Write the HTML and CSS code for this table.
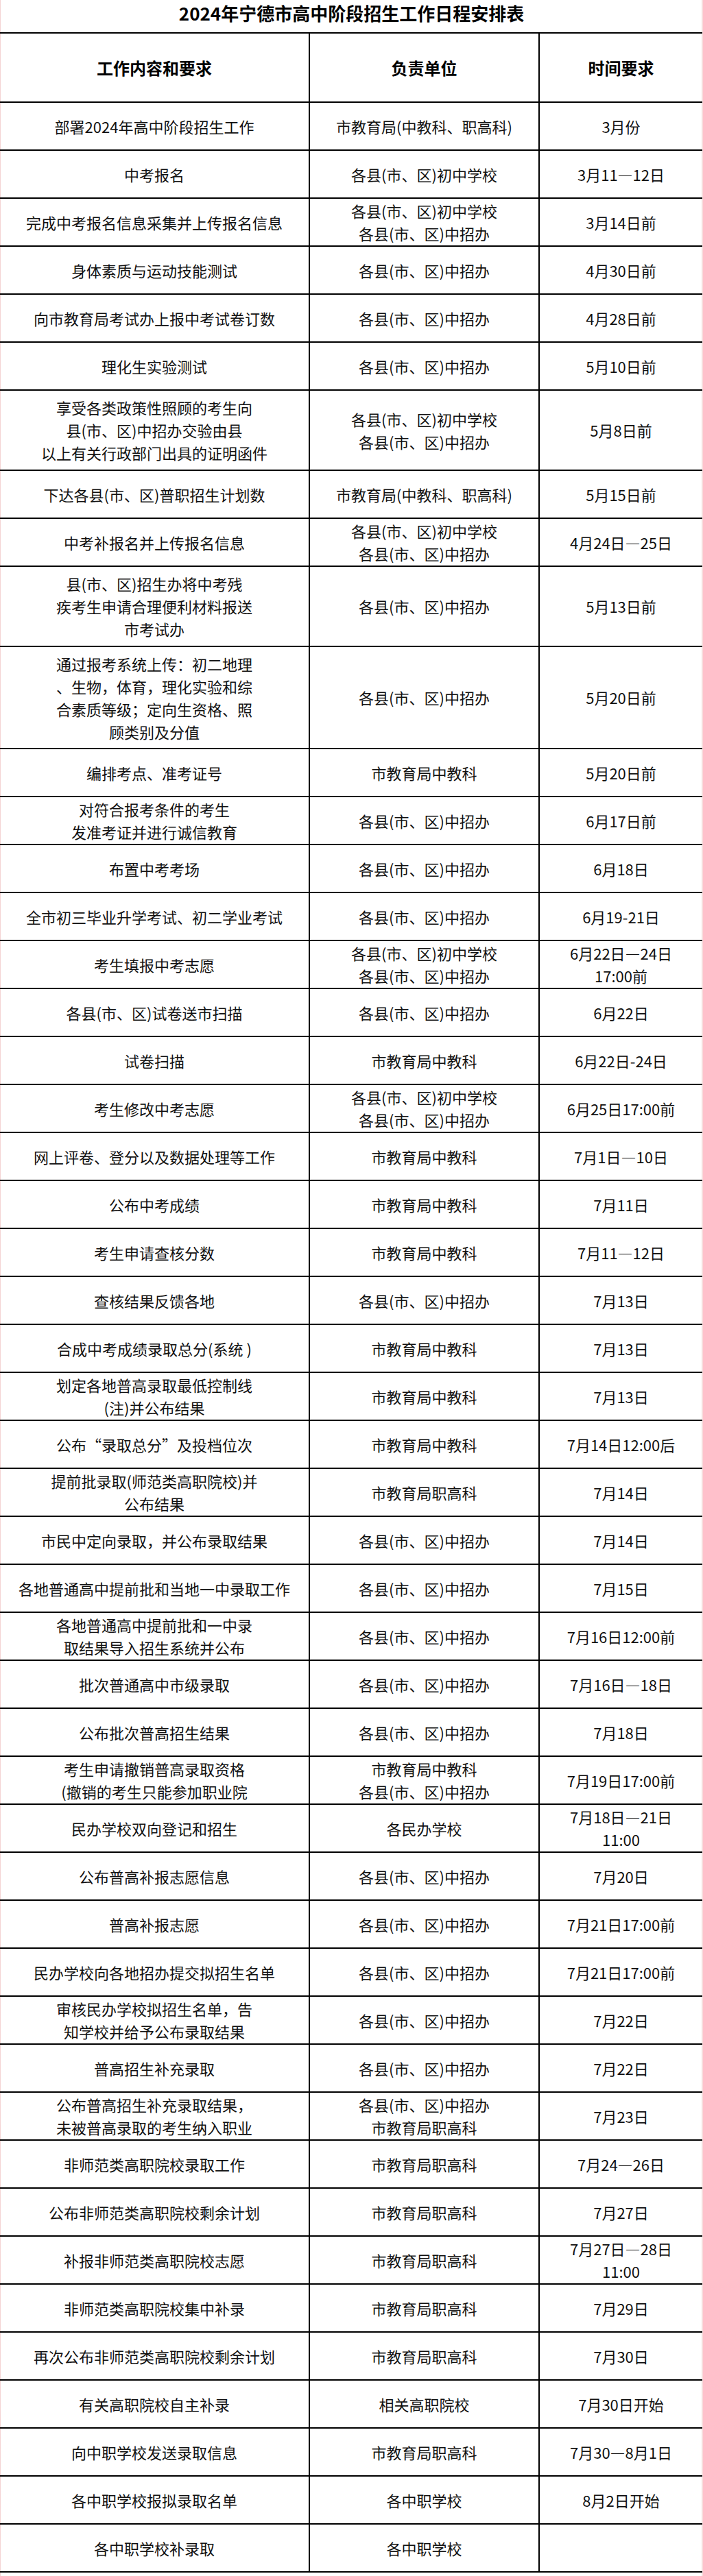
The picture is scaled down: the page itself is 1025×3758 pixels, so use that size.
FILE: index.html
```html
<!DOCTYPE html>
<html lang="zh-CN">
<head>
<meta charset="utf-8">
<title>2024年宁德市高中阶段招生工作日程安排表</title>
<link rel="stylesheet" href="styles.css">
</head>
<body>
<div class="page">
  <h1 class="title">2024年宁德市高中阶段招生工作日程安排表</h1>
  <table class="schedule">
    <colgroup><col class="c-task"><col class="c-unit"><col class="c-time"></colgroup>
    <thead>
      <tr class="head"><th>工作内容和要求</th><th>负责单位</th><th>时间要求</th></tr>
    </thead>
    <tbody>
      <tr><td>部署2024年高中阶段招生工作</td><td>市教育局(中教科、职高科)</td><td>3月份</td></tr>
      <tr><td>中考报名</td><td>各县(市、区)初中学校</td><td>3月11—12日</td></tr>
      <tr><td>完成中考报名信息采集并上传报名信息</td><td>各县(市、区)初中学校<br>各县(市、区)中招办</td><td>3月14日前</td></tr>
      <tr><td>身体素质与运动技能测试</td><td>各县(市、区)中招办</td><td>4月30日前</td></tr>
      <tr><td>向市教育局考试办上报中考试卷订数</td><td>各县(市、区)中招办</td><td>4月28日前</td></tr>
      <tr><td>理化生实验测试</td><td>各县(市、区)中招办</td><td>5月10日前</td></tr>
      <tr class="r3"><td>享受各类政策性照顾的考生向<br>县(市、区)中招办交验由县<br>以上有关行政部门出具的证明函件</td><td>各县(市、区)初中学校<br>各县(市、区)中招办</td><td>5月8日前</td></tr>
      <tr><td>下达各县(市、区)普职招生计划数</td><td>市教育局(中教科、职高科)</td><td>5月15日前</td></tr>
      <tr><td>中考补报名并上传报名信息</td><td>各县(市、区)初中学校<br>各县(市、区)中招办</td><td>4月24日—25日</td></tr>
      <tr class="r3"><td>县(市、区)招生办将中考残<br>疾考生申请合理便利材料报送<br>市考试办</td><td>各县(市、区)中招办</td><td>5月13日前</td></tr>
      <tr class="r4"><td>通过报考系统上传：初二地理<br>、生物，体育，理化实验和综<br>合素质等级；定向生资格、照<br>顾类别及分值</td><td>各县(市、区)中招办</td><td>5月20日前</td></tr>
      <tr><td>编排考点、准考证号</td><td>市教育局中教科</td><td>5月20日前</td></tr>
      <tr><td>对符合报考条件的考生<br>发准考证并进行诚信教育</td><td>各县(市、区)中招办</td><td>6月17日前</td></tr>
      <tr><td>布置中考考场</td><td>各县(市、区)中招办</td><td>6月18日</td></tr>
      <tr><td>全市初三毕业升学考试、初二学业考试</td><td>各县(市、区)中招办</td><td>6月19-21日</td></tr>
      <tr><td>考生填报中考志愿</td><td>各县(市、区)初中学校<br>各县(市、区)中招办</td><td>6月22日—24日<br>17:00前</td></tr>
      <tr><td>各县(市、区)试卷送市扫描</td><td>各县(市、区)中招办</td><td>6月22日</td></tr>
      <tr><td>试卷扫描</td><td>市教育局中教科</td><td>6月22日-24日</td></tr>
      <tr><td>考生修改中考志愿</td><td>各县(市、区)初中学校<br>各县(市、区)中招办</td><td>6月25日17:00前</td></tr>
      <tr><td>网上评卷、登分以及数据处理等工作</td><td>市教育局中教科</td><td>7月1日—10日</td></tr>
      <tr><td>公布中考成绩</td><td>市教育局中教科</td><td>7月11日</td></tr>
      <tr><td>考生申请查核分数</td><td>市教育局中教科</td><td>7月11—12日</td></tr>
      <tr><td>查核结果反馈各地</td><td>各县(市、区)中招办</td><td>7月13日</td></tr>
      <tr><td>合成中考成绩录取总分(系统 )</td><td>市教育局中教科</td><td>7月13日</td></tr>
      <tr><td>划定各地普高录取最低控制线<br>(注)并公布结果</td><td>市教育局中教科</td><td>7月13日</td></tr>
      <tr><td>公布“录取总分”及投档位次</td><td>市教育局中教科</td><td>7月14日12:00后</td></tr>
      <tr><td>提前批录取(师范类高职院校)并<br>公布结果</td><td>市教育局职高科</td><td>7月14日</td></tr>
      <tr><td>市民中定向录取，并公布录取结果</td><td>各县(市、区)中招办</td><td>7月14日</td></tr>
      <tr><td>各地普通高中提前批和当地一中录取工作</td><td>各县(市、区)中招办</td><td>7月15日</td></tr>
      <tr><td>各地普通高中提前批和一中录<br>取结果导入招生系统并公布</td><td>各县(市、区)中招办</td><td>7月16日12:00前</td></tr>
      <tr><td>批次普通高中市级录取</td><td>各县(市、区)中招办</td><td>7月16日—18日</td></tr>
      <tr><td>公布批次普高招生结果</td><td>各县(市、区)中招办</td><td>7月18日</td></tr>
      <tr><td>考生申请撤销普高录取资格<br>(撤销的考生只能参加职业院</td><td>市教育局中教科<br>各县(市、区)中招办</td><td>7月19日17:00前</td></tr>
      <tr><td>民办学校双向登记和招生</td><td>各民办学校</td><td>7月18日—21日<br>11:00</td></tr>
      <tr><td>公布普高补报志愿信息</td><td>各县(市、区)中招办</td><td>7月20日</td></tr>
      <tr><td>普高补报志愿</td><td>各县(市、区)中招办</td><td>7月21日17:00前</td></tr>
      <tr><td>民办学校向各地招办提交拟招生名单</td><td>各县(市、区)中招办</td><td>7月21日17:00前</td></tr>
      <tr><td>审核民办学校拟招生名单，告<br>知学校并给予公布录取结果</td><td>各县(市、区)中招办</td><td>7月22日</td></tr>
      <tr><td>普高招生补充录取</td><td>各县(市、区)中招办</td><td>7月22日</td></tr>
      <tr><td>公布普高招生补充录取结果，<br>未被普高录取的考生纳入职业</td><td>各县(市、区)中招办<br>市教育局职高科</td><td>7月23日</td></tr>
      <tr><td>非师范类高职院校录取工作</td><td>市教育局职高科</td><td>7月24—26日</td></tr>
      <tr><td>公布非师范类高职院校剩余计划</td><td>市教育局职高科</td><td>7月27日</td></tr>
      <tr><td>补报非师范类高职院校志愿</td><td>市教育局职高科</td><td>7月27日—28日<br>11:00</td></tr>
      <tr><td>非师范类高职院校集中补录</td><td>市教育局职高科</td><td>7月29日</td></tr>
      <tr><td>再次公布非师范类高职院校剩余计划</td><td>市教育局职高科</td><td>7月30日</td></tr>
      <tr><td>有关高职院校自主补录</td><td>相关高职院校</td><td>7月30日开始</td></tr>
      <tr><td>向中职学校发送录取信息</td><td>市教育局职高科</td><td>7月30—8月1日</td></tr>
      <tr><td>各中职学校报拟录取名单</td><td>各中职学校</td><td>8月2日开始</td></tr>
      <tr><td>各中职学校补录取</td><td>各中职学校</td><td></td></tr>
    </tbody>
  </table>
</div>
</body>
</html>
```
FILE: styles.css
```css
html, body {
  margin: 0;
  padding: 0;
  background: #ffffff;
}

.page {
  width: 1025px;
  min-height: 3758px;
  box-sizing: border-box;
  font-family: "Noto Sans CJK SC", "Noto Sans", "Liberation Sans", sans-serif;
  color: #111111;
  box-shadow: inset 1px 0 0 #f4d4d4, inset -2px 0 0 #f7dede;
  overflow: hidden;
}

.title {
  margin: 0 0 9px;
  padding: 0;
  font-size: 26px;
  line-height: 38px;
  font-weight: 700;
  text-align: center;
  color: #000000;
}

.schedule {
  width: 1024px;
  border-collapse: collapse;
  table-layout: fixed;
}

.c-task { width: 451px; }
.c-unit { width: 335px; }
.c-time { width: 238px; }

.schedule th,
.schedule td {
  border: 2px solid #000000;
  padding: 0;
  text-align: center;
  vertical-align: middle;
  font-size: 22px;
  line-height: 33px;
  font-weight: 400;
}

.schedule th:first-child,
.schedule td:first-child {
  border-left: none;
}

.schedule th:last-child,
.schedule td:last-child {
  border-right: none;
}

.schedule th {
  font-size: 24px;
  font-weight: 700;
  color: #000000;
}

.schedule tr { height: 70px; }
.schedule tr.head { height: 101px; }
.schedule tr.r3 { height: 117px; }
.schedule tr.r4 { height: 149px; }
```
